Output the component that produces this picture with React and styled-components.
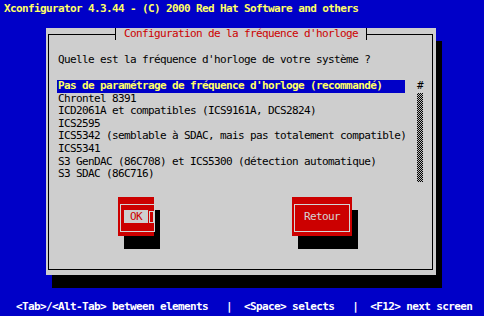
import React from 'react'
import styled, { createGlobalStyle } from 'styled-components'

const GlobalStyle = createGlobalStyle`
  html, body {
    margin: 0;
    padding: 0;
    background: #fff;
  }
  body {
    font-family: "DejaVu Sans Mono", "Liberation Mono", monospace;
  }
`

const Screen = styled.div`
  width: 484px;
  height: 316px;
  background: #0000c8;
  display: flex;
  flex-direction: column;
  overflow: hidden;
  font-size: 11px;
  letter-spacing: -0.62px;
`

const TopLine = styled.div`
  color: #ffff66;
  font-weight: bold;
  padding: 2px 0 0 4px;
  line-height: 13px;
  white-space: pre;
`

const Desktop = styled.div`
  flex: 1;
  padding: 13px 0 0 46px;
`

const Dialog = styled.div`
  box-sizing: border-box;
  width: 390px;
  height: 247px;
  background: #cecece;
  box-shadow: 6px 13px 0 #000;
  padding: 6px 3px 5px 2px;
  display: flex;
`

const Frame = styled.div`
  flex: 1;
  border: 1px solid #000;
  display: flex;
  flex-direction: column;
`

const Legend = styled.div`
  align-self: flex-start;
  margin: -7px 0 0 66px;
  height: 12px;
  line-height: 12px;
  padding: 0 8px;
  border-left: 1px solid #000;
  border-right: 1px solid #000;
  background: #cecece;
  color: #cc0000;
  white-space: pre;
`

const Question = styled.div`
  margin: 13px 0 0 9px;
  line-height: 13px;
  color: #000;
  white-space: pre;
`

const ListArea = styled.div`
  display: flex;
  gap: 12px;
  margin: 14px 0 0 8px;
`

const List = styled.div`
  width: 348px;
  display: flex;
  flex-direction: column;
`

const Item = styled.div`
  height: 12.6px;
  line-height: 12.6px;
  padding-left: 1px;
  white-space: pre;
  color: ${(p) => (p.$current ? '#ffff66' : '#000')};
  background: ${(p) => (p.$current ? '#0000c8' : 'transparent')};
  font-weight: ${(p) => (p.$current ? 'bold' : 'normal')};
`

const Scrollbar = styled.div`
  width: 6px;
  display: flex;
  flex-direction: column;
`

const Thumb = styled.div`
  height: 12.6px;
  line-height: 12.6px;
  color: #000;
  text-align: center;
`

const Track = styled.div`
  height: 89px;
  background: repeating-conic-gradient(#000 0 25%, #bdbdbd 0 50%) 0 0 / 2px 2px;
`

const Buttons = styled.div`
  display: flex;
  gap: 138px;
  margin: 15px 0 0 69px;
`

const Button = styled.div`
  box-sizing: border-box;
  width: ${(p) => p.$width}px;
  height: 39px;
  background: #cc0000;
  box-shadow: 6px 13px 0 #000;
  padding: 7px 2px 4px 2px;
  display: flex;
`

const ButtonFrame = styled.div`
  flex: 1;
  border: 1px solid #d4d4d4;
  display: flex;
  align-items: flex-start;
  padding: 5px 0 0 3px;
`

const ButtonLabel = styled.div`
  height: 13px;
  line-height: 13px;
  padding: 0 6px;
  white-space: pre;
  color: ${(p) => (p.$focused ? '#cc0000' : '#d4d4d4')};
  background: ${(p) => (p.$focused ? '#cecece' : 'transparent')};
`

const Cursor = styled.div`
  box-sizing: border-box;
  width: 5px;
  height: 12px;
  margin: 1px 0 0 1px;
  border: 1px solid #d4d4d4;
`

const StatusLine = styled.div`
  color: #fff;
  font-weight: bold;
  padding: 0 0 3px 4px;
  line-height: 13px;
  white-space: pre;
`

const choices = [
  "Pas de paramétrage de fréquence d'horloge (recommandé)",
  'Chrontel 8391',
  'ICD2061A et compatibles (ICS9161A, DCS2824)',
  'ICS2595',
  'ICS5342 (semblable à SDAC, mais pas totalement compatible)',
  'ICS5341',
  'S3 GenDAC (86C708) et ICS5300 (détection automatique)',
  'S3 SDAC (86C716)',
]

export default function App() {
  return (
    <>
      <GlobalStyle />
      <Screen>
        <TopLine>Xconfigurator 4.3.44 - (C) 2000 Red Hat Software and others</TopLine>
        <Desktop>
          <Dialog>
            <Frame>
              <Legend>Configuration de la fréquence d'horloge</Legend>
              <Question>Quelle est la fréquence d'horloge de votre système ?</Question>
              <ListArea>
                <List>
                  {choices.map((c, i) => (
                    <Item key={c} $current={i === 0}>
                      {c}
                    </Item>
                  ))}
                </List>
                <Scrollbar>
                  <Thumb>#</Thumb>
                  <Track />
                </Scrollbar>
              </ListArea>
              <Buttons>
                <Button $width={36}>
                  <ButtonFrame>
                    <ButtonLabel $focused>OK</ButtonLabel>
                    <Cursor />
                  </ButtonFrame>
                </Button>
                <Button $width={60}>
                  <ButtonFrame>
                    <ButtonLabel>Retour</ButtonLabel>
                  </ButtonFrame>
                </Button>
              </Buttons>
            </Frame>
          </Dialog>
        </Desktop>
        <StatusLine>
          {'  <Tab>/<Alt-Tab> between elements   |  <Space> selects   |  <F12> next screen'}
        </StatusLine>
      </Screen>
    </>
  )
}
